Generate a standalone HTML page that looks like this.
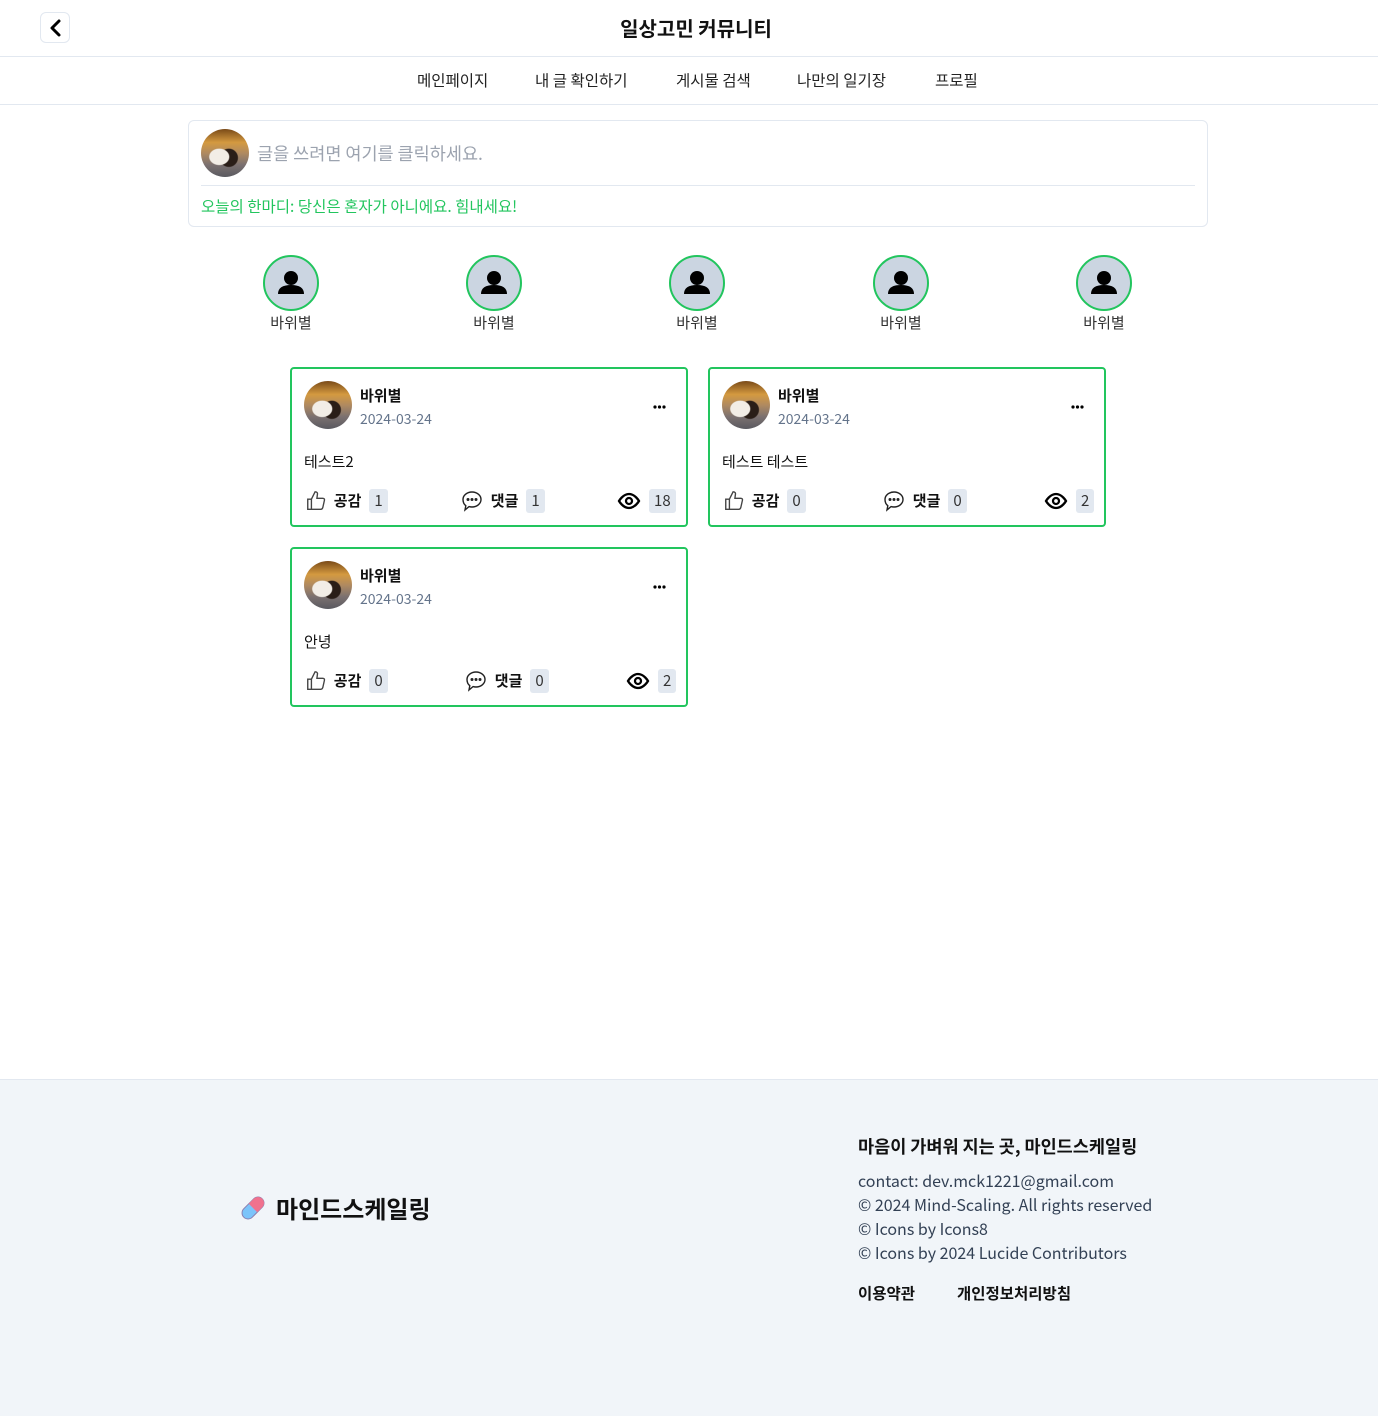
<!DOCTYPE html>
<html><head><meta charset="utf-8"><style>
*{box-sizing:border-box;margin:0;padding:0}
body{width:1378px;height:1416px;position:relative;background:#fff;font-family:"Noto Sans CJK KR","Liberation Sans",sans-serif;color:#1e293b;overflow:hidden}
.abs{position:absolute}
.hdr{top:0;left:0;width:1378px;height:57px;border-bottom:1px solid #e2e8f0}
.back{left:40px;top:12px;width:30px;height:31px;border:1px solid #e2e8f0;border-radius:6px}
.title{top:13px;left:0;width:1392px;text-align:center;font-size:20px;font-weight:bold;color:#111;line-height:30px}
.nav{top:57px;left:0;width:1378px;height:48px;border-bottom:1px solid #e2e8f0}
.nav span{position:absolute;top:12px;font-size:15.5px;color:#222;line-height:22px}
.write{left:188px;top:120px;width:1020px;height:107px;border:1px solid #e2e8f0;border-radius:6px}
.cat{border-radius:50%;background:radial-gradient(ellipse 22% 18% at 38% 58%,#f2ede6 0 90%,transparent 100%),radial-gradient(ellipse 20% 20% at 58% 60%,#2a1e18 0 90%,transparent 100%),linear-gradient(180deg,#7a4a18 0,#d49a40 28%,#b08a60 50%,#7a7070 75%,#5a5a60 100%)}
.u{width:56px;height:56px;border:2px solid #22c55e;border-radius:50%;background:#cbd5e1}
.card{width:398px;height:160px;border:2px solid #22c55e;border-radius:4px;background:#fff}
.card .nm{position:absolute;left:68px;top:16px;font-size:15px;font-weight:bold;color:#111;line-height:22px}
.card .dt{position:absolute;left:68px;top:39px;font-size:14px;color:#64748b;line-height:22px}
.card .dots{position:absolute;right:20px;top:33px;line-height:0}
.card .body{position:absolute;left:12px;top:82px;font-size:15px;color:#111;line-height:22px}
.card .ft{position:absolute;top:120px;font-size:15px;font-weight:bold;color:#111;display:flex;align-items:center;line-height:24px}
.badge{display:inline-block;background:#e2e8f0;border-radius:3px;padding:0 5px;font-weight:normal;font-size:15px;margin-left:8px;line-height:24px;color:#333}
.foot{top:1079px;left:0;width:1378px;height:337px;background:#f1f5f9;border-top:1px solid #e2e8f0}
.fi{font-size:16px;color:#334155;left:858px;line-height:24px}
</style></head><body>
<div class="abs hdr"></div>
<div class="abs back"><svg width="30" height="30" viewBox="0 0 30 30"><path d="M18 8 L11 15 L18 22" stroke="#000" stroke-width="3" fill="none" stroke-linecap="round" stroke-linejoin="round"/></svg></div>
<div class="abs title">일상고민 커뮤니티</div>
<div class="abs nav">
<span style="left:417px">메인페이지</span><span style="left:535px">내 글 확인하기</span><span style="left:676px">게시물 검색</span><span style="left:797px">나만의 일기장</span><span style="left:935px">프로필</span>
</div>
<div class="abs write">
<div class="abs cat" style="left:12px;top:8px;width:48px;height:48px"></div>
<div class="abs" style="left:68px;top:20px;font-size:17.5px;color:#9ca3af;line-height:26px">글을 쓰려면 여기를 클릭하세요.</div>
<div class="abs" style="left:12px;top:64px;width:994px;border-top:1px solid #e2e8f0"></div>
<div class="abs" style="left:12px;top:74px;font-size:15.5px;color:#22c55e;line-height:22px">오늘의 한마디: 당신은 혼자가 아니에요. 힘내세요!</div>
</div>
<div class="abs" style="top:255px;left:0;width:1378px">
<div class="abs" style="left:263px"><div class="u"><svg width="52" height="52" viewBox="0 0 52 52"><circle cx="26" cy="21" r="7" fill="#000"/><path d="M13 37 Q13 28 26 28 Q39 28 39 37 Z" fill="#000"/></svg></div><div style="font-size:15px;text-align:center;width:56px;color:#333;line-height:24px">바위별</div></div>
<div class="abs" style="left:466px"><div class="u"><svg width="52" height="52" viewBox="0 0 52 52"><circle cx="26" cy="21" r="7" fill="#000"/><path d="M13 37 Q13 28 26 28 Q39 28 39 37 Z" fill="#000"/></svg></div><div style="font-size:15px;text-align:center;width:56px;color:#333;line-height:24px">바위별</div></div>
<div class="abs" style="left:669px"><div class="u"><svg width="52" height="52" viewBox="0 0 52 52"><circle cx="26" cy="21" r="7" fill="#000"/><path d="M13 37 Q13 28 26 28 Q39 28 39 37 Z" fill="#000"/></svg></div><div style="font-size:15px;text-align:center;width:56px;color:#333;line-height:24px">바위별</div></div>
<div class="abs" style="left:873px"><div class="u"><svg width="52" height="52" viewBox="0 0 52 52"><circle cx="26" cy="21" r="7" fill="#000"/><path d="M13 37 Q13 28 26 28 Q39 28 39 37 Z" fill="#000"/></svg></div><div style="font-size:15px;text-align:center;width:56px;color:#333;line-height:24px">바위별</div></div>
<div class="abs" style="left:1076px"><div class="u"><svg width="52" height="52" viewBox="0 0 52 52"><circle cx="26" cy="21" r="7" fill="#000"/><path d="M13 37 Q13 28 26 28 Q39 28 39 37 Z" fill="#000"/></svg></div><div style="font-size:15px;text-align:center;width:56px;color:#333;line-height:24px">바위별</div></div>
</div>

<div class="abs card" style="left:290px;top:367px">
<div class="abs cat" style="left:12px;top:12px;width:48px;height:48px"></div>
<div class="nm">바위별</div><div class="dt">2024-03-24</div><div class="dots"><svg width="13" height="4" viewBox="0 0 13 4"><circle cx="2" cy="2" r="1.6" fill="#000"/><circle cx="6.5" cy="2" r="1.6" fill="#000"/><circle cx="11" cy="2" r="1.6" fill="#000"/></svg></div>
<div class="body">테스트2</div>
<div class="ft" style="left:13px"><svg width="22" height="22" viewBox="0 0 24 24" fill="none" stroke="#444" stroke-width="1.5"><path d="M7 10v11H3V10z M7 10l4-8c2 0 3 1 2.5 3L13 9h6.5c1.2 0 2 1 1.7 2.2l-1.8 8c-.3 1-1 1.8-2.2 1.8H7"/></svg>&nbsp;&nbsp;공감<span class="badge">1</span></div>
<div class="ft" style="left:168px"><svg width="24" height="24" viewBox="0 0 24 24" fill="none" stroke="#222" stroke-width="1.4"><path d="M12 3c5 0 9 3.4 9 7.5S17 18 12 18c-1 0-2-.1-3-.4L5 21l.8-4.3C4 15.3 3 13 3 10.5 3 6.4 7 3 12 3z"/><circle cx="8" cy="10.5" r=".8" fill="#222"/><circle cx="12" cy="10.5" r=".8" fill="#222"/><circle cx="16" cy="10.5" r=".8" fill="#222"/></svg>&nbsp;&nbsp;댓글<span class="badge">1</span></div>
<div class="ft" style="left:325px"><svg width="24" height="24" viewBox="0 0 24 24" fill="none" stroke="#000" stroke-width="2.3"><path d="M2 12s4-7 10-7 10 7 10 7-4 7-10 7S2 12 2 12z"/><circle cx="12" cy="12" r="3"/></svg><span class="badge">18</span></div>
</div>

<div class="abs card" style="left:708px;top:367px">
<div class="abs cat" style="left:12px;top:12px;width:48px;height:48px"></div>
<div class="nm">바위별</div><div class="dt">2024-03-24</div><div class="dots"><svg width="13" height="4" viewBox="0 0 13 4"><circle cx="2" cy="2" r="1.6" fill="#000"/><circle cx="6.5" cy="2" r="1.6" fill="#000"/><circle cx="11" cy="2" r="1.6" fill="#000"/></svg></div>
<div class="body">테스트 테스트</div>
<div class="ft" style="left:13px"><svg width="22" height="22" viewBox="0 0 24 24" fill="none" stroke="#444" stroke-width="1.5"><path d="M7 10v11H3V10z M7 10l4-8c2 0 3 1 2.5 3L13 9h6.5c1.2 0 2 1 1.7 2.2l-1.8 8c-.3 1-1 1.8-2.2 1.8H7"/></svg>&nbsp;&nbsp;공감<span class="badge">0</span></div>
<div class="ft" style="left:172px"><svg width="24" height="24" viewBox="0 0 24 24" fill="none" stroke="#222" stroke-width="1.4"><path d="M12 3c5 0 9 3.4 9 7.5S17 18 12 18c-1 0-2-.1-3-.4L5 21l.8-4.3C4 15.3 3 13 3 10.5 3 6.4 7 3 12 3z"/><circle cx="8" cy="10.5" r=".8" fill="#222"/><circle cx="12" cy="10.5" r=".8" fill="#222"/><circle cx="16" cy="10.5" r=".8" fill="#222"/></svg>&nbsp;&nbsp;댓글<span class="badge">0</span></div>
<div class="ft" style="left:334px"><svg width="24" height="24" viewBox="0 0 24 24" fill="none" stroke="#000" stroke-width="2.3"><path d="M2 12s4-7 10-7 10 7 10 7-4 7-10 7S2 12 2 12z"/><circle cx="12" cy="12" r="3"/></svg><span class="badge">2</span></div>
</div>

<div class="abs card" style="left:290px;top:547px">
<div class="abs cat" style="left:12px;top:12px;width:48px;height:48px"></div>
<div class="nm">바위별</div><div class="dt">2024-03-24</div><div class="dots"><svg width="13" height="4" viewBox="0 0 13 4"><circle cx="2" cy="2" r="1.6" fill="#000"/><circle cx="6.5" cy="2" r="1.6" fill="#000"/><circle cx="11" cy="2" r="1.6" fill="#000"/></svg></div>
<div class="body">안녕</div>
<div class="ft" style="left:13px"><svg width="22" height="22" viewBox="0 0 24 24" fill="none" stroke="#444" stroke-width="1.5"><path d="M7 10v11H3V10z M7 10l4-8c2 0 3 1 2.5 3L13 9h6.5c1.2 0 2 1 1.7 2.2l-1.8 8c-.3 1-1 1.8-2.2 1.8H7"/></svg>&nbsp;&nbsp;공감<span class="badge">0</span></div>
<div class="ft" style="left:172px"><svg width="24" height="24" viewBox="0 0 24 24" fill="none" stroke="#222" stroke-width="1.4"><path d="M12 3c5 0 9 3.4 9 7.5S17 18 12 18c-1 0-2-.1-3-.4L5 21l.8-4.3C4 15.3 3 13 3 10.5 3 6.4 7 3 12 3z"/><circle cx="8" cy="10.5" r=".8" fill="#222"/><circle cx="12" cy="10.5" r=".8" fill="#222"/><circle cx="16" cy="10.5" r=".8" fill="#222"/></svg>&nbsp;&nbsp;댓글<span class="badge">0</span></div>
<div class="ft" style="left:334px"><svg width="24" height="24" viewBox="0 0 24 24" fill="none" stroke="#000" stroke-width="2.3"><path d="M2 12s4-7 10-7 10 7 10 7-4 7-10 7S2 12 2 12z"/><circle cx="12" cy="12" r="3"/></svg><span class="badge">2</span></div>
</div>

<div class="abs foot"></div>
<div class="abs" style="left:238px;top:1193px"><svg width="30" height="30" viewBox="0 0 30 30"><g transform="rotate(-45 15 15)"><rect x="2" y="9" width="26" height="12" rx="6" fill="#7cc4fa" stroke="#8a7fb0" stroke-width="1"/><path d="M15 9h7a6 6 0 0 1 0 12h-7z" fill="#f0728e"/></g></svg></div>
<div class="abs" style="left:276px;top:1190px;font-size:24px;font-weight:bold;color:#111;line-height:36px">마인드스케일링</div>
<div class="abs" style="left:858px;top:1134px;font-size:17.5px;font-weight:bold;color:#111;line-height:26px">마음이 가벼워 지는 곳, 마인드스케일링</div>
<div class="abs fi" style="top:1168px">contact: dev.mck1221@gmail.com</div>
<div class="abs fi" style="top:1192px">© 2024 Mind-Scaling. All rights reserved</div>
<div class="abs fi" style="top:1216px">© Icons by Icons8</div>
<div class="abs fi" style="top:1240px">© Icons by 2024 Lucide Contributors</div>
<div class="abs" style="left:858px;top:1281px;font-size:15.5px;font-weight:bold;color:#111;line-height:24px">이용약관</div>
<div class="abs" style="left:957px;top:1281px;font-size:15.5px;font-weight:bold;color:#111;line-height:24px">개인정보처리방침</div>
</body></html>
